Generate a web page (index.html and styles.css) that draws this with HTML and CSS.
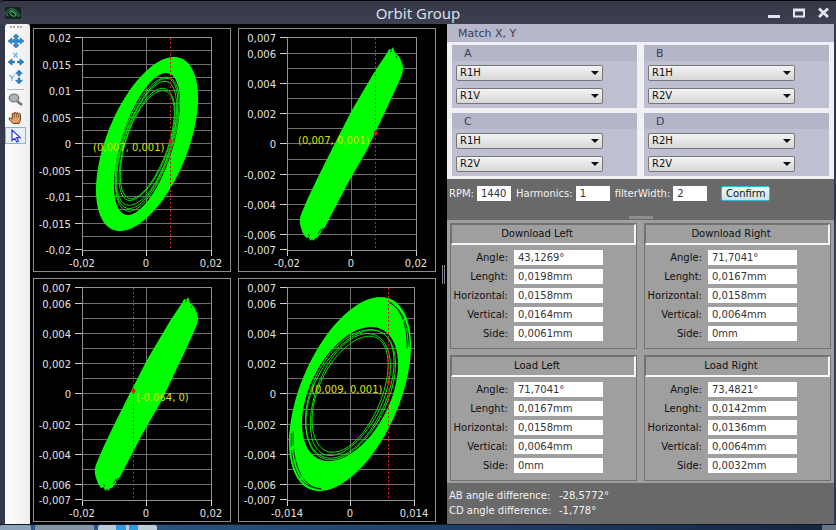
FILE: index.html
```html
<!DOCTYPE html>
<html lang="en">
<head>
<meta charset="utf-8">
<title>Orbit Group</title>
<link rel="stylesheet" href="styles.css">
</head>
<body>
<header class="titlebar">
  <svg class="app-icon" width="16" height="12" viewBox="0 0 16 12" aria-hidden="true">
    <rect width="16" height="12" fill="#15241f"/>
    <path d="M0 7C2 3 5 1 8 2s5 3 7 7M2 9c0-4 3-6 6-4s4 3 6 5M5 4c3-2 6 1 7 4" fill="none" stroke="#2f9550" stroke-width="1"/>
    <ellipse cx="8" cy="7" rx="3" ry="2" fill="none" stroke="#3f9a60" transform="rotate(25 8 7)"/>
  </svg>
  <h1>Orbit Group</h1>
  <div class="window-buttons">
    <button type="button" aria-label="Minimize"><svg width="14" height="12" viewBox="0 0 14 12"><path d="M1 9.5h12" stroke="#e3e5ee" stroke-width="3"/></svg></button>
    <button type="button" aria-label="Maximize"><svg width="14" height="12" viewBox="0 0 14 12"><path d="M1 3h12" stroke="#e3e5ee" stroke-width="3"/><path d="M2 3v6.500h10V3" fill="none" stroke="#e3e5ee" stroke-width="2"/></svg></button>
    <button type="button" aria-label="Close"><svg width="14" height="12" viewBox="0 0 14 12"><path d="M2 1.500l9 8.500M11 1.500L2 10" stroke="#e3e5ee" stroke-width="2.800"/></svg></button>
  </div>
</header>

<main class="workspace">
  <nav class="toolbar" aria-label="Chart tools">
    <span class="grip" aria-hidden="true"></span>
    <button type="button" aria-label="Pan"><svg width="16" height="14" viewBox="0 0 16 14"><path d="M8 0l3 3H9.200v2.800h3V4L16 7l-3.800 3V8.200h-3V11H11l-3 3-3-3h1.800V8.200h-3V10L0 7l3.800-3v1.800h3V3H5z" fill="#2f8fd0" stroke="#1c5f99" stroke-width=".6"/></svg></button>
    <button type="button" aria-label="Pan X"><svg width="16" height="14" viewBox="0 0 16 14"><path d="M5.500 1l4 4.500M9.500 1l-4 4.500" stroke="#6fb4dd" stroke-width="1.300"/><path d="M0 10l4-3.200V9h2.500v2H4v2.200zM16 10l-4-3.200V9H9.500v2H12v2.200z" fill="#2385c4" stroke="#1c5f99" stroke-width=".5"/></svg></button>
    <button type="button" aria-label="Pan Y"><svg width="16" height="14" viewBox="0 0 16 14"><path d="M1.500 5L4 8l2-3M4 8v3" fill="none" stroke="#6fb4dd" stroke-width="1.300"/><path d="M11 0l3.500 3.700H12V6h-2V3.700H7.500zM11 14l3.500-3.700H12V8h-2v2.300H7.500z" fill="#2385c4" stroke="#1c5f99" stroke-width=".5"/></svg></button>
    <span class="divider" aria-hidden="true"></span>
    <button type="button" aria-label="Zoom"><svg width="16" height="14" viewBox="0 0 16 14"><path d="M9 8l5 4" stroke="#777" stroke-width="2.600"/><ellipse cx="6" cy="5" rx="4.800" ry="3.800" fill="#aeb3b5" stroke="#777b7d" stroke-width="1.300"/></svg></button>
    <button type="button" aria-label="Hand"><svg width="16" height="14" viewBox="0 0 16 14"><path d="M5 12.500L1.200 8.200c-.8-1.200.6-1.900 1.500-1l1.500 1V3c.2-1.200 1.700-1.200 1.900 0 .1-2.200 2-2.200 2.200-.3.400-1.500 2-1.200 2.100.4.600-1.100 2.100-.8 2.100.7V9L11 12.500z" fill="#e0a365" stroke="#6b3d18"/><path d="M6.200 3v3.500M8.400 3v3.500M10.500 3.500v3" stroke="#6b3d18" stroke-width=".7"/></svg></button>
    <button type="button" class="active" aria-label="Select"><svg width="16" height="14" viewBox="0 0 16 14"><path d="M4 1v10.500l2.800-2.200 2 3.700 1.700-1-1.900-3.400h3.600z" fill="#fff" stroke="#3434d8" stroke-width="1.200"/></svg></button>
  </nav>

  <section class="charts" aria-label="Orbits">
    <svg class="chart" id="chart-a" viewBox="1 1 196 242" role="img" aria-label="Orbit A"></svg>
    <svg class="chart" id="chart-b" viewBox="1 1 196 242" role="img" aria-label="Orbit B"></svg>
    <svg class="chart" id="chart-c" viewBox="1 1 196 242" role="img" aria-label="Orbit C"></svg>
    <svg class="chart" id="chart-d" viewBox="1 1 196 242" role="img" aria-label="Orbit D"></svg>
    <span class="side-grip" aria-hidden="true"></span>
  </section>

  <aside class="panel">
    <section class="match">
      <h2>Match X, Y</h2>
      <div class="match-grid">
        <fieldset class="pair" aria-label="A"><div class="pair-title">A</div>
          <span class="select"><select aria-label="A X"><option>R1H</option></select></span>
          <span class="select"><select aria-label="A Y"><option>R1V</option></select></span></fieldset>
        <fieldset class="pair" aria-label="B"><div class="pair-title">B</div>
          <span class="select"><select aria-label="B X"><option>R1H</option></select></span>
          <span class="select"><select aria-label="B Y"><option>R2V</option></select></span></fieldset>
        <fieldset class="pair" aria-label="C"><div class="pair-title">C</div>
          <span class="select"><select aria-label="C X"><option>R1H</option></select></span>
          <span class="select"><select aria-label="C Y"><option>R2V</option></select></span></fieldset>
        <fieldset class="pair" aria-label="D"><div class="pair-title">D</div>
          <span class="select"><select aria-label="D X"><option>R2H</option></select></span>
          <span class="select"><select aria-label="D Y"><option>R2V</option></select></span></fieldset>
      </div>
    </section>

    <form class="settings">
      <label for="rpm">RPM:</label><input id="rpm" value="1440">
      <label for="harm">Harmonics:</label><input id="harm" value="1">
      <label for="fw">filterWidth:</label><input id="fw" value="2">
      <button type="button">Confirm</button>
    </form>
    <span class="bottom-grip" aria-hidden="true"></span>

    <section class="results">
      <div class="result"><h3>Download Left</h3><div class="fields">
        <label for="dl1">Angle:</label><input id="dl1" value="43,1269°">
        <label for="dl2">Lenght:</label><input id="dl2" value="0,0198mm">
        <label for="dl3">Horizontal:</label><input id="dl3" value="0,0158mm">
        <label for="dl4">Vertical:</label><input id="dl4" value="0,0164mm">
        <label for="dl5">Side:</label><input id="dl5" value="0,0061mm">
      </div></div>
      <div class="result"><h3>Download Right</h3><div class="fields">
        <label for="dr1">Angle:</label><input id="dr1" value="71,7041°">
        <label for="dr2">Lenght:</label><input id="dr2" value="0,0167mm">
        <label for="dr3">Horizontal:</label><input id="dr3" value="0,0158mm">
        <label for="dr4">Vertical:</label><input id="dr4" value="0,0064mm">
        <label for="dr5">Side:</label><input id="dr5" value="0mm">
      </div></div>
      <div class="result"><h3>Load Left</h3><div class="fields">
        <label for="ll1">Angle:</label><input id="ll1" value="71,7041°">
        <label for="ll2">Lenght:</label><input id="ll2" value="0,0167mm">
        <label for="ll3">Horizontal:</label><input id="ll3" value="0,0158mm">
        <label for="ll4">Vertical:</label><input id="ll4" value="0,0064mm">
        <label for="ll5">Side:</label><input id="ll5" value="0mm">
      </div></div>
      <div class="result"><h3>Load Right</h3><div class="fields">
        <label for="lr1">Angle:</label><input id="lr1" value="73,4821°">
        <label for="lr2">Lenght:</label><input id="lr2" value="0,0142mm">
        <label for="lr3">Horizontal:</label><input id="lr3" value="0,0136mm">
        <label for="lr4">Vertical:</label><input id="lr4" value="0,0064mm">
        <label for="lr5">Side:</label><input id="lr5" value="0,0032mm">
      </div></div>
    </section>

    <dl class="summary">
      <dt>AB angle difference:</dt><dd>-28,5772°</dd>
      <dt>CD angle difference:</dt><dd>-1,778°</dd>
    </dl>
  </aside>
</main>

<footer class="taskbar" aria-hidden="true">
  <span class="task start"></span><span class="task dim"></span><span class="task lit"></span><span class="tray"></span>
</footer>
<script src="charts.js"></script>
</body>
</html>
```
FILE: styles.css
```css
* { box-sizing: border-box; }
body {
  margin: 0;
  min-height: 100vh;
  display: flex;
  flex-direction: column;
  background: #353849;
  font-family: "DejaVu Sans", Verdana, sans-serif;
  font-size: 10px;
  line-height: 15px;
  color: #1c1c22;
}
h1, h2, h3, dl, dd, fieldset { margin: 0; padding: 0; font-weight: normal; }
button { font: inherit; padding: 0; margin: 0; border: 0; background: none; }
svg { display: block; }

.titlebar {
  height: 24px;
  display: grid;
  grid-template-columns: 1fr auto 1fr;
  align-items: center;
  padding: 0 5px;
  border-top: 1px solid #05060c;
  border-radius: 4px 0 0 0;
  background: linear-gradient(#343847, #3d4050);
}
.titlebar h1 {
  font: 15px/20px "Noto Sans", sans-serif;
  color: #dcdee8;
}
.window-buttons { display: flex; gap: 11px; justify-content: flex-end; }

.workspace {
  flex: 1;
  display: grid;
  grid-template-columns: 25px 417fr 387fr;
  padding: 0 2px 0 5px;
}
.toolbar {
  display: flex;
  flex-direction: column;
  align-items: center;
  gap: 1px;
  padding: 2px 4px 0 0;
  background: linear-gradient(90deg, #fdfdfe, #eeeeef);
  border-radius: 3px 3px 0 0;
}
.toolbar button {
  width: 21px;
  height: 17px;
  display: grid;
  place-items: center;
  flex: none;
}
.toolbar .active { border: 1px solid #7db4ec; background: #e6f1fc; }
.grip { width: 12px; height: 4px; margin-bottom: 1px; border-top: 2px dotted #aaa; flex: none; }
.divider { width: 17px; height: 1px; margin: 3px 0 0; background: #b8b8b8; flex: none; }

.charts {
  position: relative;
  display: grid;
  grid-template-columns: 1fr 1fr;
  grid-template-rows: 1fr 1fr;
  gap: 6px 7px;
  padding: 4px 11px 2px 3px;
  background: #000;
}
.chart { width: 100%; height: 100%; min-height: 0; border: 1px solid #8d8d8d; }
.chart text { font-size: 10px; fill: #e0e0e0; }
.chart .labels-y { text-anchor: end; }
.chart .labels-x { text-anchor: middle; }
.chart .readout { fill: #d8e000; }
.grid { stroke: #707070; fill: none; }
.frame { stroke: #8f8f8f; fill: none; }
.ticks { stroke: #d0d0d0; fill: none; }
.orbit { fill: #0f0; fill-rule: evenodd; }
.trace { fill: none; stroke: #00e800; stroke-width: 1; }
.gap { fill: none; stroke: #002800; stroke-width: 1; }
.cursor { stroke: #d01420; stroke-dasharray: 2 2; }
.marker { fill: #e81010; }
.side-grip {
  position: absolute;
  right: 2px;
  top: 241px;
  width: 3px;
  height: 19px;
  border: solid #85858f;
  border-width: 0 1px;
}

.panel { display: flex; flex-direction: column; background: #696969; min-width: 0; }
.match { padding: 1px 0 0; background: #b6b7cb; }
.match h2 { font-size: 11px; line-height: 17px; padding-left: 11px; color: #3b3d52; }
.match-grid {
  display: grid;
  grid-template-columns: 1fr 1fr;
  gap: 5px 7px;
  padding: 3px 5px;
  background: #f1f1f3;
}
.pair {
  min-width: 0;
  display: grid;
  gap: 7px;
  border: 0;
  padding: 0 4px 4px;
  background: #bebfd0;
}
.pair-title {
  margin: 0 -4px -3px;
  padding-left: 12px;
  line-height: 17px;
  font-size: 11px;
  color: #3b3d52;
  background: #b4b5c9;
  height: 16px;
}
.select { position: relative; width: 83%; height: 16px; }
.select::after {
  content: "";
  position: absolute;
  right: 4px;
  top: 6px;
  width: 8px;
  height: 4px;
  background: #111;
  clip-path: polygon(0 0, 100% 0, 50% 100%);
  pointer-events: none;
}
select {
  appearance: none;
  display: block;
  width: 100%;
  height: 16px;
  padding: 0 3px;
  border: 1px solid #777;
  border-radius: 2px;
  background: linear-gradient(#f4f4f4, #d6d6d6);
  font: inherit;
  line-height: 14px;
  color: #111;
}

.settings { display: flex; align-items: center; padding: 7px 2px; color: #f2f2f2; }
input {
  min-width: 0;
  height: 15px;
  padding: 0 4px;
  border: 0;
  background: #fff;
  font: inherit;
  color: #33333b;
}
.settings input { width: 34px; margin: 0 5px 0 3px; }
.settings button {
  margin-left: 9px;
  width: 49px;
  height: 15px;
  border: 1px solid #38b4e0;
  border-radius: 2px;
  background: linear-gradient(#f2fafd, #c9e3ee);
  line-height: 13px;
  color: #111;
}
.bottom-grip { align-self: center; width: 24px; height: 3px; margin: 8px 0 1px; background: #8c8c93; }

.results {
  display: grid;
  grid-template-columns: 1fr 1fr;
  gap: 6px 7px;
  padding: 3px 3px 2px;
  background: #9f9f9f;
}
.result { border: 1px solid #727272; padding-bottom: 7px; min-width: 0; }
.result h3 {
  font-size: 10px;
  line-height: 18px;
  padding-right: 12px;
  text-align: center;
  color: #111;
  border: 1px solid #727272;
  border-right: 2px solid #f6f6f6;
  border-bottom: 2px solid #f6f6f6;
}
.fields {
  display: grid;
  grid-template-columns: 57px 89px;
  gap: 4px 6px;
  padding-top: 5px;
}
.fields label { text-align: right; color: #111; }

.summary {
  display: grid;
  grid-template-columns: 104px auto;
  column-gap: 6px;
  padding: 5px 2px 6px;
  color: #f2f2f2;
  white-space: nowrap;
}

.taskbar { display: flex; gap: 4px; height: 6px; background: linear-gradient(90deg, #2c5d8d, #1d3c66 60%, #16253f); border-top: 1px solid #101828; }
.task { width: 59px; border-radius: 2px 2px 0 0; }
.start { width: 31px; background: #8ba3b8; }
.dim { background: #8495a5; }
.lit { background: linear-gradient(90deg, #bccbd8 18px, #2a9be0 18px 28px, #bccbd8 28px 31px, #2a9be0 31px 40px, #bccbd8 40px); }
.tray { width: 14px; margin-left: auto; background: #697585; }
```
FILE: charts.js
```js
// Draws the four orbit plots: grid, axes, orbit traces and cursor.
const BAND = "M149 25L151 21L153 22L155 19L157 25Q162 28 163 33Q167 40 163 49L154 69L137 105L129 122L110 155L87 199L79 210L77 210L76 213L74 211L72 213L71 209L68 210Q64 205 63 200Q60 192 64 184L70 170L80 149L97 115L114 82L124 65L137 43Z";
const SPECKS = "M152 24l2-1M158 28l1 2M80 206l3-5M83 204l2-4M70 206l2 2";

// Closed ellipse with half-width w, half-height h and x/y correlation r.
function orbit([w, h, r], cx, cy, wobble = 0) {
  const k = Math.sqrt(1 - r * r);
  let d = "";
  for (let i = 0; i < 90; i++) {
    const t = (i / 90) * 2 * Math.PI;
    const n = 1 + wobble * Math.sin(3 * t + w);
    const x = cx + w * n * Math.cos(t);
    const y = cy - h * n * (r * Math.cos(t) + k * Math.sin(t));
    d += (i ? "L" : "M") + x.toFixed(1) + " " + y.toFixed(1);
  }
  return d + "Z";
}

const fine = [["0,007", 10], ["0,006", 26], ["0,004", 56], ["0,002", 86], ["0", 116], ["-0,002", 147], ["-0,004", 177], ["-0,006", 207], ["-0,007", 222]];
const coarse = [["0,02", 10], ["0,015", 37], ["0,01", 63], ["0,005", 90], ["0", 116], ["-0,005", 143], ["-0,01", 169], ["-0,015", 196], ["-0,02", 222]];
const fineGrid = [26, 41, 56, 71, 86, 101, 116, 132, 147, 162, 177, 192, 207];
const coarseGrid = [23, 37, 50, 63, 76, 90, 103, 116, 129, 143, 156, 169, 182, 196, 209];

const charts = {
  "chart-a": {
    y: coarse, grid: coarseGrid, x: ["-0,02", "0", "0,02"], right: 178, mid: 113,
    outer: [51, 87, .53], inner: [33, 71, .58], center: [114, 116],
    traces: [[32, 67, .58], [31, 65, .6], [30, 62, .59], [28, 56, .58], [27, 54, .58]], gaps: [],
    cursor: 137, dot: 113, text: "(0,007, 0,001)", at: [60, 123]
  },
  "chart-b": {
    y: fine, grid: fineGrid, x: ["-0,02", "0", "0,02"], right: 178, mid: 113,
    cursor: 137, dot: 105, text: "(0,007, 0,001)", at: [60, 116]
  },
  "chart-c": {
    y: fine, grid: fineGrid, x: ["-0,02", "0", "0,02"], right: 178, mid: 113,
    cursor: 100, dot: 113, text: "(-0,064, 0)", at: [103, 123]
  },
  "chart-d": {
    y: fine, grid: fineGrid, x: ["-0,014", "0", "0,014"], right: 176, mid: 112,
    outer: [61, 97, .5], inner: [48, 67, .44], center: [112, 116],
    traces: [[45, 65, .44], [44, 64, .47], [40, 61, .47], [38, 58, .48]],
    gaps: [[59, 94, .5], [57, 95, .48]],
    cursor: 150, dot: 104, text: "(0,009, 0,001)", at: [73, 115]
  }
};

for (const [id, c] of Object.entries(charts)) {
  const xs = [49, c.mid, c.right];
  const lines = c.grid.map(y => `M49 ${y - .5}H${c.right}`).join("") + `M${c.mid + .5} 10V222`;
  const ticks = c.y.map(([, y]) => `M42 ${y - .5}h7`).join("") + xs.map(x => `M${x + .5} 222v6`).join("");
  let body;
  if (c.outer) {
    const [cx, cy] = c.center;
    body = `<path class="orbit" d="${orbit(c.outer, cx, cy)}${orbit(c.inner, cx, cy)}"/>`
      + c.traces.map(t => `<path class="trace" d="${orbit(t, cx, cy, .012)}"/>`).join("")
      + c.gaps.map(t => `<path class="gap" stroke-dasharray="14 3 30 2 22 180" stroke-dashoffset="20" d="${orbit(t, cx, cy, .006)}"/>`).join("");
  } else {
    body = `<path class="orbit" d="${BAND}"/><path class="gap" d="${SPECKS}"/>`;
  }
  document.getElementById(id).innerHTML =
    `<path class="grid" d="${lines}"/>`
    + `<rect class="frame" x="49.5" y="9.5" width="${c.right - 49}" height="213"/>`
    + `<path class="ticks" d="${ticks}"/>`
    + `<g class="labels-y">${c.y.map(([s, y]) => `<text x="38" y="${y + 4}">${s}</text>`).join("")}</g>`
    + `<g class="labels-x">${c.x.map((s, i) => `<text x="${xs[i]}" y="239">${s}</text>`).join("")}</g>`
    + body
    + `<path class="cursor" d="M${c.cursor + .5} 10V222"/>`
    + `<circle class="marker" cx="${c.cursor + .5}" cy="${c.dot}" r="2"/>`
    + `<text class="readout" x="${c.at[0]}" y="${c.at[1]}">${c.text}</text>`;
}
```
